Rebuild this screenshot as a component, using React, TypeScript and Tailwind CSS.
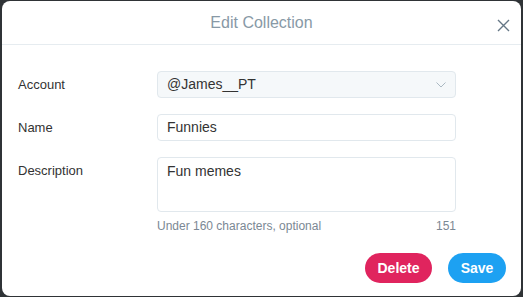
export default function App() {
  return (
    <div className="w-[523px] h-[297px] bg-[#2f3336] px-[2px] pt-[1px] pb-[1px] font-['Liberation_Sans',Arial,sans-serif]">
      <div className="h-full bg-white rounded-lg flex flex-col">
        {/* Header */}
        <div className="relative h-[44px] border-b border-[#e6ecf0] flex items-center justify-center">
          <h2 className="text-[16px] text-[#8899a6]">Edit Collection</h2>
          <button className="absolute right-[11px] top-[17px] w-[14px] h-[14px] flex items-center justify-center">
            <svg width="13" height="13" viewBox="0 0 13 13" fill="none" stroke="#657786" strokeWidth="1.4">
              <path d="M1 1L12 12M12 1L1 12" />
            </svg>
          </button>
        </div>

        {/* Form */}
        <div className="pt-[26px] pl-[16px] flex flex-col">
          <div className="flex items-center h-[27px]">
            <label className="w-[139px] text-[13px] text-[#333]">Account</label>
            <div className="w-[299px] h-[27px] bg-[#f5f8fa] border border-[#e1e8ed] rounded flex items-center justify-between px-[9px]">
              <span className="text-[14px] text-[#333]">@James__PT</span>
              <svg width="10" height="6" viewBox="0 0 10 6" fill="none" stroke="#aab8c2" strokeWidth="1">
                <path d="M0.5 0.5L5 5L9.5 0.5" />
              </svg>
            </div>
          </div>

          <div className="flex items-center h-[27px] mt-[16px]">
            <label className="w-[139px] text-[13px] text-[#333]">Name</label>
            <div className="w-[299px] h-[27px] bg-white border border-[#e1e8ed] rounded flex items-center px-[9px]">
              <span className="text-[14px] text-[#333]">Funnies</span>
            </div>
          </div>

          <div className="flex mt-[16px]">
            <label className="w-[139px] text-[13px] leading-[16px] text-[#333] pt-[6px]">Description</label>
            <div className="w-[299px] flex flex-col">
              <div className="h-[55px] bg-white border border-[#e1e8ed] rounded px-[9px] pt-[5px] leading-[16px]">
                <span className="text-[14px] text-[#333]">Fun memes</span>
              </div>
              <div className="flex justify-between mt-[5px] text-[12px] text-[#7b8894]">
                <span>Under 160 characters, optional</span>
                <span>151</span>
              </div>
            </div>
          </div>
        </div>

        {/* Footer */}
        <div className="flex justify-end gap-[16px] pr-[15px] mt-[18px]">
          <button className="w-[67px] h-[30px] rounded-full bg-[#e0245e] text-white text-[14px] font-bold">
            Delete
          </button>
          <button className="w-[58px] h-[30px] rounded-full bg-[#1da1f2] text-white text-[14px] font-bold">
            Save
          </button>
        </div>
      </div>
    </div>
  );
}
